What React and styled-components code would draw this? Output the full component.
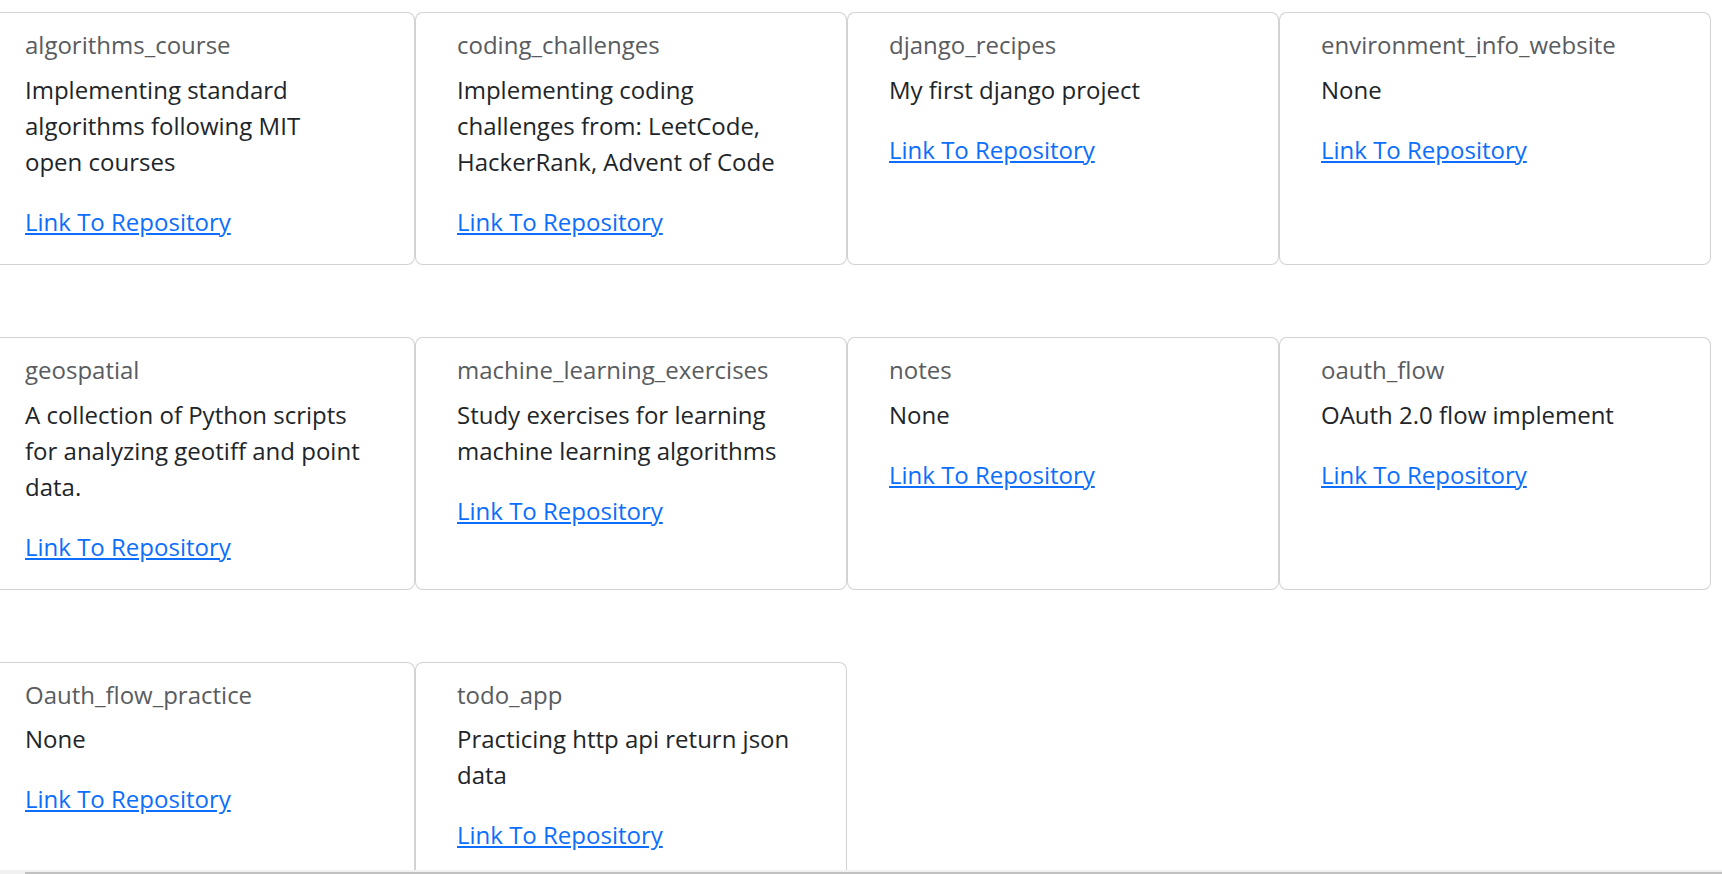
import React, { useLayoutEffect, useRef } from "react";
import styled, { createGlobalStyle } from "styled-components";

const GlobalStyle = createGlobalStyle`
  html, body {
    margin: 0;
    padding: 0;
    background: #ffffff;
    overflow: hidden;
  }
  body {
    font-family: "Open Sans", "Noto Sans", sans-serif;
    font-size: 24px;
    line-height: 1.5;
    color: #212529;
  }
  * { box-sizing: border-box; }
`;

const Page = styled.div`
  display: flex;
  flex-direction: column;
  height: 100vh;
  width: 100vw;
`;

const ScrollArea = styled.div`
  flex: 1;
  min-height: 0;
  overflow: hidden;
`;

const Content = styled.main`
  width: 1752px;
  padding: 12px;
`;

const CardGrid = styled.div`
  display: grid;
  grid-template-columns: repeat(4, 432px);
  row-gap: 72px;
  column-gap: 0;
  align-items: stretch;
`;

const Card = styled.article`
  display: flex;
  flex-direction: column;
  background: #ffffff;
  border: 1px solid rgba(0, 0, 0, 0.175);
  border-radius: 8px;
  padding: 24px 53px 24px 41px;
  min-width: 0;
`;

const Title = styled.h6`
  margin: -6px 0 12px;
  font-size: 24px;
  font-weight: 400;
  line-height: 1.2;
  color: #595c5f;
`;

const Description = styled.p`
  margin: 0 0 24px;
  font-size: 24px;
  line-height: 1.5;
  color: #212529;
`;

const RepoLink = styled.a`
  align-self: flex-start;
  font-size: 24px;
  line-height: 1.5;
  color: #0d6efd;
  text-decoration: underline;
`;

const ScrollbarTrack = styled.div`
  flex: none;
  height: 4px;
  background: #f1f1f1;
  padding: 2px 0 0 25px;
`;

const ScrollbarThumb = styled.div`
  height: 2px;
  background: #c1c1c1;
`;

const repos = [
  { name: "algorithms_course", desc: "Implementing standard algorithms following MIT open courses" },
  { name: "coding_challenges", desc: "Implementing coding challenges from: LeetCode, HackerRank, Advent of Code" },
  { name: "django_recipes", desc: "My first django project" },
  { name: "environment_info_website", desc: "None" },
  { name: "geospatial", desc: "A collection of Python scripts for analyzing geotiff and point data." },
  { name: "machine_learning_exercises", desc: "Study exercises for learning machine learning algorithms" },
  { name: "notes", desc: "None" },
  { name: "oauth_flow", desc: "OAuth 2.0 flow implement" },
  { name: "Oauth_flow_practice", desc: "None" },
  { name: "todo_app", desc: "Practicing http api return json data" },
];

export default function App() {
  const scrollRef = useRef(null);

  useLayoutEffect(() => {
    if (scrollRef.current) scrollRef.current.scrollLeft = 29;
  }, []);

  return (
    <Page>
      <GlobalStyle />
      <ScrollArea ref={scrollRef}>
        <Content>
          <CardGrid>
            {repos.map((r) => (
              <Card key={r.name}>
                <Title>{r.name}</Title>
                <Description>{r.desc}</Description>
                <RepoLink href={`#${r.name}`}>Link To Repository</RepoLink>
              </Card>
            ))}
          </CardGrid>
        </Content>
      </ScrollArea>
      <ScrollbarTrack>
        <ScrollbarThumb />
      </ScrollbarTrack>
    </Page>
  );
}
